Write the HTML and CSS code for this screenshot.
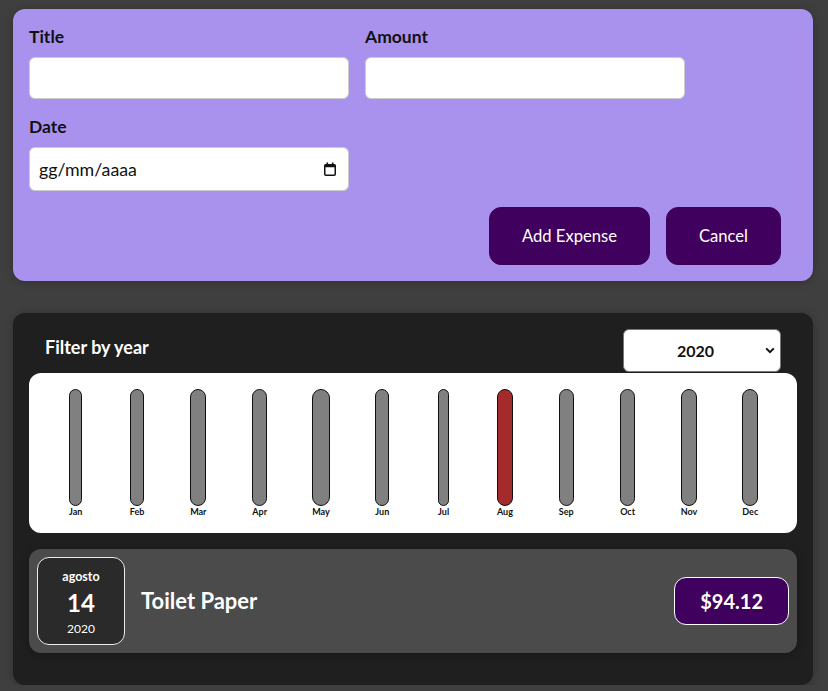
FILE: index.html
```html
<!DOCTYPE html>
<html lang="it">
<head>
<meta charset="utf-8">
<title>Expenses</title>
<link rel="stylesheet" href="styles.css">
</head>
<body>
<div class="page">
  <div class="new-expense">
    <form class="form">
      <div class="controls">
        <div class="control">
          <label>Title</label>
          <input type="text" class="field">
        </div>
        <div class="control">
          <label>Amount</label>
          <input type="text" class="field">
        </div>
        <div class="control">
          <label>Date</label>
          <div class="field date-field">
            <span class="date-text">gg/mm/aaaa</span>
            <svg class="cal-icon" width="12" height="14" viewBox="0 0 12 14">
              <rect x="0.75" y="2.75" width="10.5" height="10.5" rx="1" fill="none" stroke="#111" stroke-width="1.5"/>
              <rect x="0.75" y="2.75" width="10.5" height="2.5" fill="#111"/>
              <rect x="2.5" y="0.5" width="1.6" height="2.8" fill="#111"/>
              <rect x="7.9" y="0.5" width="1.6" height="2.8" fill="#111"/>
            </svg>
          </div>
        </div>
      </div>
      <div class="actions">
        <button type="button" class="btn">Add Expense</button>
        <button type="button" class="btn">Cancel</button>
      </div>
    </form>
  </div>

  <div class="expenses">
    <div class="filter">
      <label class="filter-label">Filter by year</label>
      <div class="select-wrap">
        <select class="select">
          <option>2020</option>
        </select>
        <svg class="chev" width="10" height="7" viewBox="0 0 10 7">
          <path d="M1.2 1.4 L5 5.2 L8.8 1.4" fill="none" stroke="#111" stroke-width="2"/>
        </svg>
      </div>
    </div>

    <div class="chart">
      <div class="bar"><div class="bar-body"><div class="bar-inner"></div><div class="bar-label">Jan</div></div></div>
      <div class="bar"><div class="bar-body"><div class="bar-inner"></div><div class="bar-label">Feb</div></div></div>
      <div class="bar"><div class="bar-body"><div class="bar-inner"></div><div class="bar-label">Mar</div></div></div>
      <div class="bar"><div class="bar-body"><div class="bar-inner"></div><div class="bar-label">Apr</div></div></div>
      <div class="bar"><div class="bar-body"><div class="bar-inner"></div><div class="bar-label">May</div></div></div>
      <div class="bar"><div class="bar-body"><div class="bar-inner"></div><div class="bar-label">Jun</div></div></div>
      <div class="bar"><div class="bar-body"><div class="bar-inner"></div><div class="bar-label">Jul</div></div></div>
      <div class="bar"><div class="bar-body"><div class="bar-inner bar-inner--full"></div><div class="bar-label">Aug</div></div></div>
      <div class="bar"><div class="bar-body"><div class="bar-inner"></div><div class="bar-label">Sep</div></div></div>
      <div class="bar"><div class="bar-body"><div class="bar-inner"></div><div class="bar-label">Oct</div></div></div>
      <div class="bar"><div class="bar-body"><div class="bar-inner"></div><div class="bar-label">Nov</div></div></div>
      <div class="bar"><div class="bar-body"><div class="bar-inner"></div><div class="bar-label">Dec</div></div></div>
    </div>

    <div class="item">
      <div class="date">
        <div class="date-month">agosto</div>
        <div class="date-day">14</div>
        <div class="date-year">2020</div>
      </div>
      <div class="desc">
        <h2 class="title">Toilet Paper</h2>
        <div class="price">$94.12</div>
      </div>
    </div>
  </div>
</div>
</body>
</html>
```

FILE: styles.css
```css
* { box-sizing: border-box; }

html, body {
  margin: 0;
  padding: 0;
  background: #3f3f3f;
}

body {
  font-family: Lato, "Liberation Sans", sans-serif;
  font-size: 16px;
  line-height: 24px;
}

.page {
  padding: 9px 0 0 13px;
}

.new-expense {
  width: 800px;
  padding: 16px;
  background: #a892ee;
  border-radius: 12px;
  box-shadow: 0 1px 8px rgba(0, 0, 0, 0.25);
  margin-bottom: 32px;
}

.form { margin: 0; }

.controls {
  display: flex;
  flex-wrap: wrap;
  gap: 16px;
  margin-bottom: 16px;
}

.control label {
  display: block;
  font-size: 17.5px;
  font-weight: bold;
  margin-bottom: 8px;
  color: #111;
}

.field {
  font: inherit;
  width: 320px;
  height: 42px;
  padding: 8px;
  border: 1px solid #ccc;
  border-radius: 6px;
  background: #fff;
  color: #111;
  margin: 0;
}

.date-field {
  height: 44px;
  display: flex;
  align-items: center;
  justify-content: space-between;
  padding: 8px 12px 8px 9px;
}

.date-text {
  color: #111;
  font-size: 17.8px;
}

.cal-icon { display: block; margin-top: -1px; }

.actions {
  display: flex;
  justify-content: flex-end;
  gap: 16px;
  padding-right: 16px;
}

.btn {
  font: inherit;
  font-size: 16.6px;
  padding: 16px 32px;
  border: 1px solid #40005d;
  background: #40005d;
  color: #fff;
  border-radius: 12px;
  margin: 0;
  cursor: pointer;
}

.expenses {
  width: 800px;
  padding: 16px;
  background: #1f1f1f;
  border-radius: 12px;
  box-shadow: 0 1px 8px rgba(0, 0, 0, 0.25);
}

.filter {
  display: flex;
  align-items: center;
  justify-content: space-between;
  padding: 0 16px;
  color: #fff;
}

.filter-label {
  font-size: 18px;
  font-weight: bold;
  margin-bottom: 8px;
}

.select-wrap {
  position: relative;
  width: 158px;
  height: 43px;
}

.select {
  appearance: none;
  -webkit-appearance: none;
  font: inherit;
  font-weight: bold;
  width: 100%;
  height: 100%;
  padding: 8px 8px 8px 53px;
  border: 1px solid #767676;
  border-radius: 6px;
  background: #fff;
  color: #111;
}

.chev {
  position: absolute;
  right: 6px;
  top: 18px;
}

.chart {
  margin-top: 1px;
  height: 160px;
  padding: 16px;
  background: #fff;
  border-radius: 12px;
  display: flex;
}

.bar {
  flex: 1;
  height: 100%;
  display: flex;
  justify-content: center;
}

.bar-body {
  height: 100%;
  display: flex;
  flex-direction: column;
}

.bar-inner {
  flex: 1;
  border: 1px solid #111;
  border-radius: 12px;
  background: #808080;
}

.bar-inner--full { background: #a52a2a; }

.bar-label {
  font-size: 9px;
  line-height: 11px;
  font-weight: bold;
  text-align: center;
  color: #111;
}

.item {
  display: flex;
  align-items: center;
  padding: 8px;
  margin: 16px 0;
  background: #4b4b4b;
  border-radius: 12px;
  box-shadow: 0 2px 8px rgba(0, 0, 0, 0.25);
}

.date {
  width: 88px;
  height: 88px;
  padding-top: 3px;
  display: flex;
  flex-direction: column;
  align-items: center;
  justify-content: center;
  border: 1px solid #ececec;
  background: #2a2a2a;
  color: #fff;
  border-radius: 12px;
}

.date-month {
  font-size: 12.5px;
  line-height: 18px;
  font-weight: bold;
}

.date-day {
  font-size: 24px;
  line-height: 34px;
  font-weight: bold;
}

.date-year {
  font-size: 12px;
  line-height: 18px;
}

.desc {
  flex: 1;
  display: flex;
  align-items: center;
  justify-content: flex-start;
}

.title {
  flex: 1;
  margin: 0 16px;
  font-size: 22px;
  line-height: 30px;
  color: #fff;
}

.price {
  font-size: 20px;
  line-height: 30px;
  font-weight: bold;
  color: #fff;
  background: #40005d;
  border: 1px solid #fff;
  padding: 8px 25px;
  border-radius: 12px;
}
```
